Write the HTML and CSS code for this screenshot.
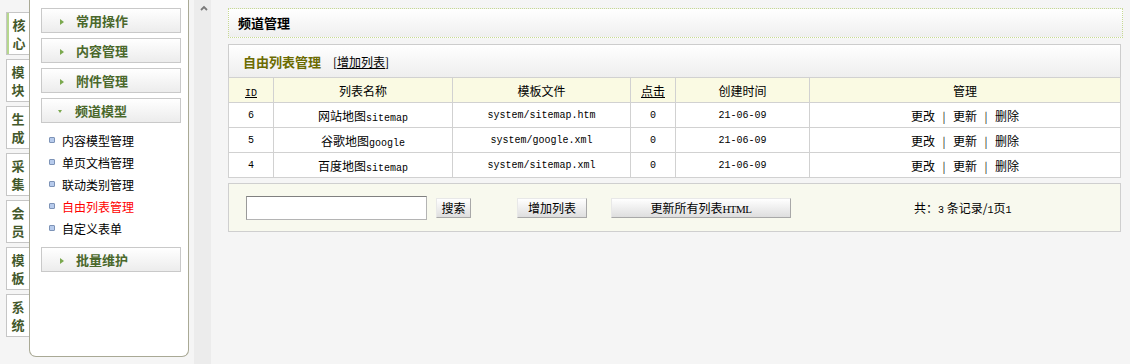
FILE: index.html
```html
<!DOCTYPE html>
<html lang="zh-CN">
<head>
<meta charset="utf-8">
<title>频道管理</title>
<link rel="stylesheet" href="styles.css">
</head>
<body>
<div class="page">
  <nav class="tabs">
    <div class="tab active">核<br>心</div>
    <div class="tab">模<br>块</div>
    <div class="tab">生<br>成</div>
    <div class="tab">采<br>集</div>
    <div class="tab">会<br>员</div>
    <div class="tab">模<br>板</div>
    <div class="tab">系<br>统</div>
  </nav>

  <aside class="side">
    <div class="menu-btn"><span class="arr"></span>常用操作</div>
    <div class="menu-btn"><span class="arr"></span>内容管理</div>
    <div class="menu-btn"><span class="arr"></span>附件管理</div>
    <div class="menu-btn open"><span class="arr down"></span>频道模型</div>
    <ul class="sub">
      <li><span class="dot"></span>内容模型管理</li>
      <li><span class="dot"></span>单页文档管理</li>
      <li><span class="dot"></span>联动类别管理</li>
      <li class="cur"><span class="dot"></span>自由列表管理</li>
      <li><span class="dot"></span>自定义表单</li>
    </ul>
    <div class="menu-btn"><span class="arr"></span>批量维护</div>
  </aside>

  <div class="strip">
    <svg class="up" width="8" height="6" viewBox="0 0 8 6"><path d="M1 5 L4 2 L7 5" fill="none" stroke="#7a7a7a" stroke-width="1.8"/></svg>
  </div>

  <main class="main">
    <div class="head-box">频道管理</div>

    <div class="list-box">
      <div class="list-title"><b>自由列表管理</b><span class="add">[<u>增加列表</u>]</span></div>
      <table class="grid">
        <colgroup>
          <col class="c1"><col class="c2"><col class="c3"><col class="c4"><col class="c5"><col>
        </colgroup>
        <thead>
          <tr>
            <th><u class="m">ID</u></th>
            <th>列表名称</th>
            <th>模板文件</th>
            <th><u>点击</u></th>
            <th>创建时间</th>
            <th>管理</th>
          </tr>
        </thead>
        <tbody>
          <tr>
            <td class="m">6</td>
            <td>网站地图<span class="m">sitemap</span></td>
            <td class="m">system/sitemap.htm</td>
            <td class="m">0</td>
            <td class="m">21-06-09</td>
            <td>更改<span class="sep">|</span>更新<span class="sep">|</span>删除</td>
          </tr>
          <tr>
            <td class="m">5</td>
            <td>谷歌地图<span class="m">google</span></td>
            <td class="m">system/google.xml</td>
            <td class="m">0</td>
            <td class="m">21-06-09</td>
            <td>更改<span class="sep">|</span>更新<span class="sep">|</span>删除</td>
          </tr>
          <tr>
            <td class="m">4</td>
            <td>百度地图<span class="m">sitemap</span></td>
            <td class="m">system/sitemap.xml</td>
            <td class="m">0</td>
            <td class="m">21-06-09</td>
            <td>更改<span class="sep">|</span>更新<span class="sep">|</span>删除</td>
          </tr>
        </tbody>
      </table>
    </div>

    <div class="bar">
      <input class="kw" type="text">
      <button class="btn b-search">搜索</button>
      <button class="btn b-add">增加列表</button>
      <button class="btn b-all">更新所有列表<span class="html">HTML</span></button>
      <span class="total">共：<span class="m">3</span> 条记录/<span class="m">1</span>页<span class="m">1</span></span>
    </div>
  </main>
</div>
</body>
</html>
```

FILE: styles.css
```css
* { box-sizing: border-box; }

html, body {
  margin: 0;
  padding: 0;
  background: #f5f5f5;
  font-family: "Noto Sans CJK SC", "Liberation Sans", sans-serif;
  font-size: 12px;
  color: #000;
}

.page {
  display: flex;
  align-items: flex-start;
  width: 1130px;
  height: 364px;
  overflow: hidden;
}

/* vertical tabs */
.tabs {
  width: 29px;
  padding: 12px 0 0 6px;
  display: flex;
  flex-direction: column;
  gap: 4px;
  flex: none;
}
.tab {
  width: 23px;
  height: 43px;
  border: 1px solid #c6c6c6;
  border-right: none;
  background: #fff;
  color: #44592c;
  font-weight: bold;
  font-size: 13px;
  line-height: 18px;
  padding-top: 3px;
  text-align: center;
}
.tab.active {
  box-shadow: inset 2px 0 0 #b6d78e;
  padding-left: 2px;
}

/* sidebar panel */
.side {
  width: 160px;
  height: 357px;
  flex: none;
  background: #fff;
  border: 1px solid #a9a995;
  border-top: none;
  border-radius: 0 0 7px 7px;
  padding: 8px 0 0 11px;
}
.menu-btn {
  width: 140px;
  height: 25px;
  border: 1px solid #c9c9c9;
  background: linear-gradient(#ffffff, #ececec);
  margin-bottom: 5px;
  padding-left: 18px;
  display: flex;
  align-items: center;
  color: #4a682b;
  font-weight: bold;
  font-size: 13px;
}
.menu-btn.open { margin-bottom: 0; }
.arr {
  width: 0;
  height: 0;
  border-left: 4px solid #7aa84e;
  border-top: 3.5px solid transparent;
  border-bottom: 3.5px solid transparent;
  margin: 2px 12px 0 0;
}
.arr.down {
  border-left: 2.5px solid transparent;
  border-right: 2.5px solid transparent;
  border-top: 3px solid #7aa84e;
  border-bottom: none;
  margin: 2px 13px 0 -2px;
}
.sub {
  list-style: none;
  margin: 0;
  padding: 6px 0 8px 8px;
}
.sub li {
  height: 22px;
  display: flex;
  align-items: center;
  color: #000;
}
.sub li.cur { color: #f00; }
.dot {
  width: 6px;
  height: 6px;
  border: 1px solid #7d93b7;
  background: #b7cbec;
  border-radius: 1px;
  margin-right: 7px;
}

/* scroll strip */
.strip {
  width: 17px;
  height: 364px;
  margin-left: 5px;
  background: #ececec;
  flex: none;
  padding: 5px 0 0 6px;
}
.up { display: block; }

/* main */
.main {
  flex: 1;
  padding: 8px 7px 0 17px;
}
.head-box {
  height: 30px;
  border: 1px dotted #c7da93;
  background: linear-gradient(#ffffff, #efefef);
  padding-left: 9px;
  line-height: 28px;
  font-weight: bold;
  font-size: 13px;
}
.list-box {
  width: 893px;
  margin-top: 6px;
  background: #fff;
}
.list-title {
  height: 33px;
  border: 1px solid #cdcdcd;
  border-bottom: none;
  background: linear-gradient(#ffffff, #eeeeee);
  padding-left: 14px;
  display: flex;
  align-items: center;
}
.list-title b {
  color: #6b6b00;
  font-size: 13px;
}
.list-title .add { margin-left: 12px; }

.grid {
  width: 893px;
  border-collapse: collapse;
  table-layout: fixed;
}
.c1 { width: 45px; }
.c2 { width: 179px; }
.c3 { width: 178px; }
.c4 { width: 45px; }
.c5 { width: 134px; }
.grid th, .grid td {
  border: 1px solid #d1d1d1;
  height: 25px;
  padding: 0;
  text-align: center;
  font-weight: normal;
  white-space: nowrap;
}
.grid th { background: #fafae3; }
.grid td { background: #fff; }
.m {
  font-family: "Liberation Mono", monospace;
  font-size: 10px;
}
td.m { font-size: 10px; }
.sep {
  display: inline-block;
  width: 18px;
  text-align: center;
  font-size: 11px;
  color: #222;
}

/* bottom bar */
.bar {
  width: 893px;
  height: 49px;
  margin-top: 5px;
  border: 1px solid #cfcfcf;
  background: #f8f9ee;
  display: flex;
  align-items: center;
  padding-left: 17px;
}
.kw {
  width: 181px;
  height: 24px;
  border: 1px solid #b4b4b4;
  border-top-color: #808080;
  border-left-color: #9a9a9a;
  background: #fff;
  margin: 0;
  padding: 0;
}
.btn {
  height: 20px;
  margin: 0;
  padding: 0;
  border: 1px solid #a8a8a8;
  border-top-color: #e8e8e8;
  border-left-color: #e8e8e8;
  background: linear-gradient(#ffffff, #dedede);
  font-family: "Noto Sans CJK SC", "Liberation Sans", sans-serif;
  font-size: 12px;
  color: #000;
  line-height: 18px;
}
.btn .html {
  font-family: "Liberation Serif", serif;
  font-size: 11px;
  letter-spacing: -0.5px;
}
.b-search { width: 35px; margin-left: 9px; }
.b-add { width: 70px; margin-left: 46px; }
.b-all { width: 180px; margin-left: 24px; }
.total { margin-left: 123px; }
```
